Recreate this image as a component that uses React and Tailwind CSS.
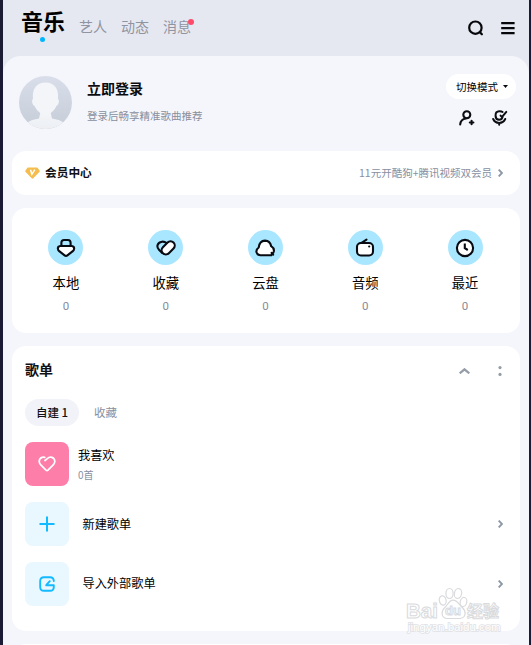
const navTabs = ["艺人", "动态", "消息"];

function LocalIcon() {
  return (
    <svg className="h-5 w-5" viewBox="0 0 20 20" fill="none" stroke="#080b12" strokeWidth="2.100" strokeLinejoin="round">
      <path d="M5.400 8V4.800Q5.400 2 8 2h4Q14.600 2 14.600 4.800V8" />
      <path d="M4.200 8h11.600q2.600.4 2.300 2.800-.2 1.400-1.300 2.300l-5.400 4.300q-1.400 1.100-2.800 0L3.200 13.100Q2.100 12.200 1.900 10.800 1.600 8.400 4.200 8z" fill="#fff" />
    </svg>
  );
}

function FavoriteIcon() {
  return (
    <svg className="h-5 w-5" viewBox="0 0 20 20" fill="none" stroke="#080b12" strokeWidth="2.100" strokeLinecap="round" strokeLinejoin="round">
      <path d="M10.400 5.100Q8.600 3.400 6 3.700 2.400 4.200 1.500 7.200 1 9.700 3 11.700L6.200 15" />
      <rect x="4.700" y="5.700" width="15" height="8.400" rx="4.200" transform="rotate(-45 12.200 9.900)" fill="#fff" />
    </svg>
  );
}

function CloudIcon() {
  return (
    <svg className="h-5 w-5" viewBox="0 0 20 20" fill="none" stroke="#080b12" strokeWidth="2.100" strokeLinecap="round" strokeLinejoin="round">
      <path d="M16.300 17.300H5.400Q2.300 17.100 1.500 14.300.9 11.500 3.700 9.500 4.400 2.900 10 2.600q5.100.2 6.200 5.600 3.300 2.200 2.600 5.200-.4 1.500-1.700 2.300z" fill="#fff" />
      <path d="M16.600 14.800l1.500 1.900" />
    </svg>
  );
}

function RadioIcon() {
  return (
    <svg className="h-5 w-5" viewBox="0 0 20 20" fill="none" stroke="#080b12" strokeWidth="2.100" strokeLinecap="round" strokeLinejoin="round">
      <rect x="2" y="5" width="16" height="12.500" rx="3.900" fill="#fff" />
      <path d="M6.500 4.800l5-3.200" />
      <circle cx="14.200" cy="8.500" r=".5" strokeWidth="1.200" />
    </svg>
  );
}

function RecentIcon() {
  return (
    <svg className="h-5 w-5" viewBox="0 0 20 20" fill="none" stroke="#080b12" strokeWidth="2.100">
      <circle cx="10" cy="10" r="8.100" fill="#fff" />
      <path d="M9.800 5.500v4.700l3 1.800" />
    </svg>
  );
}

const shortcuts = [
  { label: "本地", count: 0, icon: LocalIcon },
  { label: "收藏", count: 0, icon: FavoriteIcon },
  { label: "云盘", count: 0, icon: CloudIcon },
  { label: "音频", count: 0, icon: RadioIcon },
  { label: "最近", count: 0, icon: RecentIcon },
];

function Chevron() {
  return (
    <svg className="h-2 w-[5px]" viewBox="0 0 5 8" fill="none" stroke="#8d98a5" strokeWidth="1.900">
      <path d="M.7.6L4 4 .7 7.400" />
    </svg>
  );
}

function Avatar() {
  return (
    <svg className="mt-5 h-[53px] w-[53px]" viewBox="0 0 53 53">
      <defs>
        <linearGradient id="avatarBg" x1="0" y1="0" x2="0" y2="1">
          <stop offset="0" stopColor="#d9deea" />
          <stop offset="1" stopColor="#c5cdd7" />
        </linearGradient>
        <linearGradient id="avatarBody" x1="0" y1="0" x2="0" y2="1">
          <stop offset="0" stopColor="#f3f5f9" />
          <stop offset="1" stopColor="#ebeef2" />
        </linearGradient>
        <clipPath id="avatarClip">
          <circle cx="26.500" cy="26.500" r="26.500" />
        </clipPath>
      </defs>
      <g clipPath="url(#avatarClip)">
        <rect width="53" height="53" fill="url(#avatarBg)" />
        <path d="M7 47Q13 43.500 20 42.600L21.500 36h10l1.500 6.600Q40 43.500 46 47v8H7z" fill="url(#avatarBody)" />
        <path d="M26.500 6.500C17 6.500 13 13.500 14 23c-1.800.8-.6 6.400 1.500 6.800C17.500 34.500 22 39 26.500 39s9-4.500 11-9.200c2.100-.4 3.300-6 1.500-6.800 1-9.500-3-16.500-12.500-16.500z" fill="#f3f5f9" />
      </g>
    </svg>
  );
}

function Header() {
  return (
    <header className="flex h-14 items-start justify-between">
      <nav className="flex pl-[18px]">
        <div className="flex w-[44px] flex-col items-center">
          <h1 className="mt-1 text-[22px] leading-8 font-bold whitespace-nowrap text-black">音乐</h1>
          <span className="mt-px mr-px h-[5px] w-[5px] rounded-full bg-[#00b7ff]"></span>
        </div>
        <div className="mt-[15.500px] ml-3.5 flex gap-3.5 text-[14px] leading-5 text-[#8f94a2]">
          {navTabs.map((tab) => (
            <span key={tab} className="relative">
              {tab}
              {tab === "消息" && (
                <span className="absolute top-[3px] -right-[3px] h-1.5 w-1.5 rounded-full bg-[#ff4b69]"></span>
              )}
            </span>
          ))}
        </div>
      </nav>
      <div className="mt-5 mr-3.5 flex items-center gap-[17px]">
        <svg className="h-4 w-4" viewBox="0 0 16 16" fill="none" stroke="#06070b" strokeWidth="2.200" strokeLinecap="round">
          <circle cx="7.400" cy="7.700" r="6.200" />
          <path d="M12.200 12.600l1.700 1.700" />
        </svg>
        <svg className="h-4 w-3.5" viewBox="0 0 14 16" stroke="#06070b" strokeWidth="2.200">
          <path d="M.2 3.200h13.400M.2 8.200h13.400M.2 13.200h13.400" />
        </svg>
      </div>
    </header>
  );
}

function Profile() {
  return (
    <section className="flex h-[95px] items-start pl-4">
      <Avatar />
      <div className="mt-[22px] ml-[15px] flex-1">
        <h2 className="text-[14px] leading-5 font-bold text-[#0b0c10]">立即登录</h2>
        <p className="mt-2 text-[10.5px] leading-5 text-[#878f9f]">登录后畅享精准歌曲推荐</p>
      </div>
      <div className="mt-[18px] mr-[13px] flex flex-col items-end">
        <button className="flex h-[25px] w-[70px] items-center gap-[5px] rounded-full bg-white pl-2.5 text-[10.5px] font-normal whitespace-nowrap text-black">
          切换模式
          <svg className="h-[3px] w-[5px]" viewBox="0 0 5 3" fill="#090a0d">
            <path d="M0 0h5L2.500 3z" />
          </svg>
        </button>
        <div className="mt-[11px] mr-[8px] flex gap-[17px]">
          <svg className="h-4 w-4" viewBox="0 0 16 16" fill="none" stroke="#0b0d12" strokeWidth="2.100" strokeLinecap="round">
            <circle cx="7.800" cy="4.800" r="3.500" />
            <path d="M1.200 14.500c.3-3.600 2.200-5.500 5.700-6M12.600 10.700v3.600M10.800 12.500h3.600" />
          </svg>
          <svg className="h-4 w-4" viewBox="0 0 16 16" fill="none" stroke="#0b0d12" strokeWidth="2" strokeLinecap="round">
            <path d="M10.600 2Q9.500 1.200 7.200 1.300 3.600 1.600 3.600 5v1.400q.2 3.200 3.500 3.400 2.800-.2 3.400-2.600" />
            <path d="M1.200 9q1.600 3.800 6 3.900 4.300-.1 6-3.900M7.200 13v1.700" />
            <path d="M14.300 1.900l-3.800 4.500M8.600 5.600l1.400 1.600" />
          </svg>
        </div>
      </div>
    </section>
  );
}

function MemberCard() {
  return (
    <section className="mx-[9px] flex h-11 items-center rounded-[14px] bg-white pr-[17px] pb-px pl-[13px]">
      <svg className="h-3 w-[15px]" viewBox="0 0 15 12">
        <path d="M3.200.4h8.600q.5 0 .8.4l2.100 3q.3.5-.1.9l-6.300 6.600q-.8.700-1.600 0L.4 4.700Q0 4.300.3 3.800l2.100-3q.3-.4.8-.4z" fill="#f5bd4e" />
        <path d="M5.500 2.700l1.400 4.600 2.900-4.600" fill="none" stroke="#fff" strokeWidth="1.500" />
      </svg>
      <h2 className="mb-px ml-[5px] text-[11.700px] leading-5 font-bold text-[#101116]">会员中心</h2>
      <span className="ml-auto text-[10.5px] leading-5 text-[#878f9f]">11元开酷狗+腾讯视频双会员</span>
      <span className="ml-[6px]">
        <Chevron />
      </span>
    </section>
  );
}

function Shortcuts() {
  return (
    <section className="mx-[9px] mt-[13px] h-[125px] rounded-[14px] bg-white pt-[22px] pl-1">
      <div className="grid w-[499px] grid-cols-5">
        {shortcuts.map(({ label, count, icon: Icon }) => (
          <div key={label} className="flex flex-col items-center">
            <div className="flex h-[35px] w-[35px] items-center justify-center rounded-full bg-[#a9e6ff]">
              <Icon />
            </div>
            <span className="mt-2 text-[13.300px] leading-5 font-normal text-black">{label}</span>
            <span className="mt-[5px] font-['Roboto',sans-serif] text-[11.5px] leading-4 text-[#878b9a]">{count}</span>
          </div>
        ))}
      </div>
    </section>
  );
}

function Playlists() {
  return (
    <section className="mx-[9px] mt-[13px] h-[285px] rounded-[14px] bg-white pr-[17px] pl-[13px]">
      <div className="flex items-center justify-between pt-[13px]">
        <h2 className="text-[14px] leading-5 font-bold text-[#101116]">歌单</h2>
        <div className="mt-[3px] flex items-center gap-7">
          <svg className="h-1.5 w-[11px]" viewBox="0 0 11 6" fill="none" stroke="#939ca7" strokeWidth="2.200">
            <path d="M.7 5.300l4.800-4 4.800 4" />
          </svg>
          <svg className="mr-px h-2.5 w-1" viewBox="0 0 4 10" fill="#939ca7">
            <circle cx="2" cy="1.600" r="1.600" />
            <circle cx="2" cy="8.400" r="1.600" />
          </svg>
        </div>
      </div>

      <div className="mt-5 flex items-center">
        <span className="flex h-[27px] w-[54px] items-center justify-center rounded-full bg-[#f2f3f9] text-[11.5px] font-medium text-[#101116]">
          自建 1
        </span>
        <span className="ml-[15px] text-[11.5px] text-[#878f9f]">收藏</span>
      </div>

      <div className="mt-4 flex h-11 items-center">
        <div className="flex h-11 w-11 items-center justify-center rounded-[8px] bg-[#fd7ea8]">
          <svg className="h-4 w-[18px]" viewBox="0 0 18 16" fill="none" stroke="#fff" strokeWidth="1.700" strokeLinecap="round" strokeLinejoin="round">
            <path d="M7 4.500l2-1.700Q11.500.5 14 1.400q3 1.300 2.800 4.300-.2 1.800-1.600 3.200L10 14.200q-1 .9-2 0L2.800 8.900Q1.400 7.500 1.200 5.700 1.100 2.600 4 1.400q1.300-.5 2.700 0" />
          </svg>
        </div>
        <div className="mt-px ml-[9px]">
          <p className="text-[12.200px] leading-5 font-normal text-black">我喜欢</p>
          <p className="text-[10px] leading-5 text-[#878f9f]">0首</p>
        </div>
      </div>

      <div className="mt-4 flex h-11 items-center">
        <div className="flex h-11 w-11 items-center justify-center rounded-[8px] bg-[#e9f7ff]">
          <svg className="h-4 w-4" viewBox="0 0 16 16" stroke="#12baff" strokeWidth="2">
            <path d="M8 .5v15M.5 8h15" />
          </svg>
        </div>
        <span className="ml-[13.500px] text-[12.200px] font-normal text-black">新建歌单</span>
        <span className="ml-auto">
          <Chevron />
        </span>
      </div>

      <div className="mt-[15.500px] flex h-11 items-center">
        <div className="flex h-11 w-11 items-center justify-center rounded-[8px] bg-[#e9f7ff]">
          <svg className="h-4 w-4" viewBox="0 0 16 16" fill="none" stroke="#12baff" strokeWidth="1.900" strokeLinecap="round" strokeLinejoin="round">
            <path d="M14.800 5Q14.700 1.200 11 1.200H5Q1.200 1.200 1.200 5v6q0 3.800 3.800 3.800h6q3.800 0 3.800-3.800V9.200H7.500M10.800 5.200L7.200 9.200" />
          </svg>
        </div>
        <span className="ml-[13.500px] text-[12.200px] font-normal text-black">导入外部歌单</span>
        <span className="ml-auto">
          <Chevron />
        </span>
      </div>
    </section>
  );
}

function Watermark() {
  return (
    <div className="absolute top-[587px] left-[406px] h-[48px] w-[98px] whitespace-nowrap text-white select-none">
      <svg className="absolute top-0 left-[32px] h-[33px] w-[30px]" viewBox="0 0 30 33" fill="#fff" stroke="#d9dadd" strokeWidth="1.200">
        <ellipse cx="11.500" cy="6.500" rx="3.600" ry="5" />
        <ellipse cx="20" cy="6.500" rx="3.600" ry="5" transform="rotate(12 20 6.500)" />
        <ellipse cx="4.700" cy="13.500" rx="3.400" ry="4.700" transform="rotate(-12 4.700 13.500)" />
        <ellipse cx="25.500" cy="15" rx="3.300" ry="4.600" transform="rotate(12 25.500 15)" />
        <path d="M15 13.200c-4 0-5 4.500-8.300 7.500-3.500 3.500-4 9.800 2 10.800h13.600c6-1 6-7.300 2.200-10.800-3.700-3.200-5-7.500-9.500-7.500z" />
      </svg>
      <span className="absolute top-[12px] left-0 font-['Liberation_Sans',sans-serif] text-[20.500px] leading-6 font-bold [-webkit-text-stroke:1px_#d9dadd]">
        Bai
      </span>
      <span className="absolute top-[14px] left-[39px] font-['Liberation_Sans',sans-serif] text-[13px] leading-5 font-bold [-webkit-text-stroke:1px_#d9dadd]">
        du
      </span>
      <span className="absolute top-[11px] left-[61px] text-[16px] leading-6 font-bold [-webkit-text-stroke:1px_#d9dadd]">经验</span>
      <span className="absolute top-[32px] left-[2px] font-['Liberation_Sans',sans-serif] text-[11.5px] leading-4 [-webkit-text-stroke:1.600px_#e0e1e4] [paint-order:stroke]">
        jingyan.baidu.com
      </span>
    </div>
  );
}

export default function App() {
  return (
    <main className="relative h-[645px] w-[531px] overflow-hidden bg-[#1b1b36] pr-[2px] pl-[3px] font-['Noto_Sans_CJK_SC',sans-serif]">
      <div className="h-full bg-[#e6e8f1]">
        <Header />
        <div className="h-[589px] overflow-hidden rounded-t-[18px] bg-[#f5f6fb]">
          <Profile />
          <MemberCard />
          <Shortcuts />
          <Playlists />
          <section className="mx-[9px] mt-[13px] h-10 rounded-[14px] bg-white"></section>
        </div>
      </div>
      <Watermark />
    </main>
  );
}
